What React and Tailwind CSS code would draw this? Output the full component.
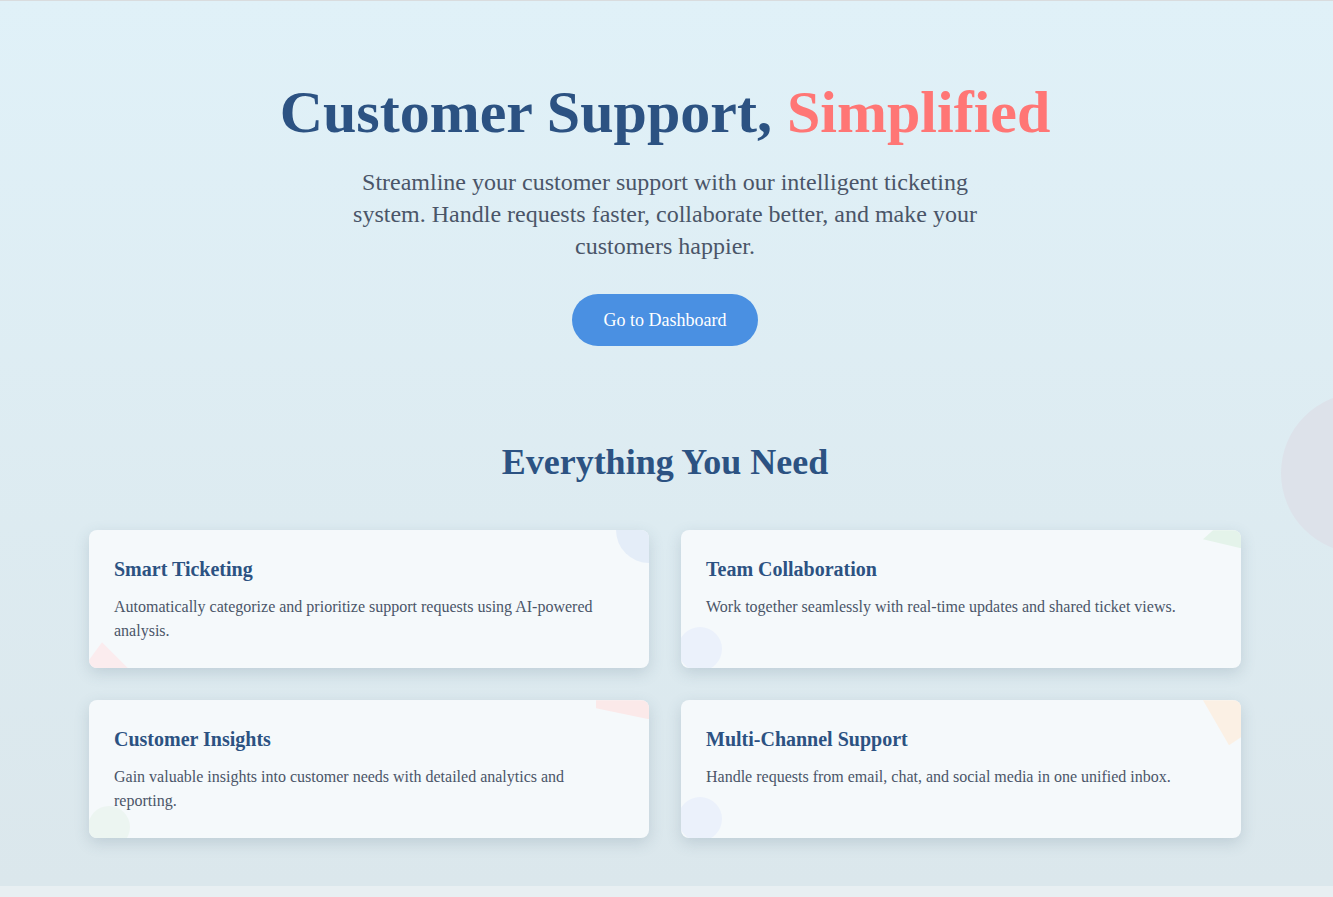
import React from 'react';

const features = [
  {
    title: 'Smart Ticketing',
    text: 'Automatically categorize and prioritize support requests using AI-powered analysis.',
    top: 'circle',
    bottom: 'triangle',
  },
  {
    title: 'Team Collaboration',
    text: 'Work together seamlessly with real-time updates and shared ticket views.',
    top: 'green',
    bottom: 'blue',
  },
  {
    title: 'Customer Insights',
    text: 'Gain valuable insights into customer needs with detailed analytics and reporting.',
    top: 'pink',
    bottom: 'mint',
  },
  {
    title: 'Multi-Channel Support',
    text: 'Handle requests from email, chat, and social media in one unified inbox.',
    top: 'orange',
    bottom: 'blue',
  },
];

const TopShape = ({ kind }) => {
  if (kind === 'circle') {
    return <div className="absolute -top-[33px] -right-[33px] w-[66px] h-[66px] rounded-full bg-[#e4edf8]" />;
  }
  if (kind === 'green') {
    return <div className="absolute top-0 right-0 w-[38px] h-[18px] bg-[#e4f3ea] [clip-path:polygon(0_9px,10px_0,100%_0,100%_100%)]" />;
  }
  if (kind === 'pink') {
    return <div className="absolute top-0 right-0 w-[53px] h-[19px] bg-[#fbe9e9] [clip-path:polygon(0_0,100%_0,100%_100%,0_8px)]" />;
  }
  return <div className="absolute top-0 right-0 w-[38px] h-[45px] bg-[#fbf0e4] [clip-path:polygon(0_0,100%_0,100%_37px,26px_100%)]" />;
};

const BottomShape = ({ kind }) => {
  if (kind === 'triangle') {
    return <div className="absolute -bottom-[4px] -left-[9px] w-[48px] h-[30px] bg-[#fbecee] [clip-path:polygon(22px_0,100%_26px,0_100%)]" />;
  }
  if (kind === 'mint') {
    return <div className="absolute -bottom-[10px] -left-[1px] w-[42px] h-[42px] rounded-full bg-[#ecf5f1]" />;
  }
  return <div className="absolute -bottom-[3px] -left-[3px] w-[44px] h-[44px] rounded-full bg-[#ebf1fb]" />;
};

const FeatureCard = ({ feature }) => (
  <div className="relative overflow-hidden rounded-lg bg-[#f5f9fb] px-[25px] pt-[25px] pb-[25px] shadow-[0_5px_15px_rgba(60,90,110,0.18)]">
    <TopShape kind={feature.top} />
    <BottomShape kind={feature.bottom} />
    <h3 className="relative text-[20px] leading-7 font-bold text-[#2c5282] mb-3">{feature.title}</h3>
    <p className="relative text-base leading-6 text-[#4a5568]">{feature.text}</p>
  </div>
);

export default function App() {
  return (
    <div className="min-h-screen border-t border-[#d9dcde] font-['Liberation_Serif',serif] overflow-x-hidden">
      {/* Hero + features */}
      <section className="relative h-[885px] bg-gradient-to-b from-[#e0f1f8] to-[#dbe7ec]">
        <div className="absolute top-[392px] -right-[108px] w-[160px] h-[160px] rounded-full bg-[#dde2ea]" />

        <div className="relative flex flex-col items-center pt-[75px] pr-[3px] text-center">
          <h1 className="text-[60px] leading-[1.2] font-bold text-[#2c5282] mb-[18px]">
            Customer Support, <span className="text-[#ff7675]">Simplified</span>
          </h1>
          <p className="max-w-[640px] text-[24px] leading-8 text-[#4a5568] mb-8">
            Streamline your customer support with our intelligent ticketing system. Handle requests faster, collaborate better, and make your customers happier.
          </p>
          <button className="rounded-full bg-[#4a90e2] px-8 py-3 text-[18px] leading-7 text-white">
            Go to Dashboard
          </button>

          <h2 className="mt-[95px] mb-[46px] text-[36px] leading-[1.2] font-bold text-[#2c5282]">
            Everything You Need
          </h2>

          <div className="grid w-full max-w-6xl grid-cols-2 gap-8 text-left">
            {features.map((f) => (
              <FeatureCard key={f.title} feature={f} />
            ))}
          </div>
        </div>
      </section>

      <section className="h-[500px] bg-[#e8eff2]" />
    </div>
  );
}
